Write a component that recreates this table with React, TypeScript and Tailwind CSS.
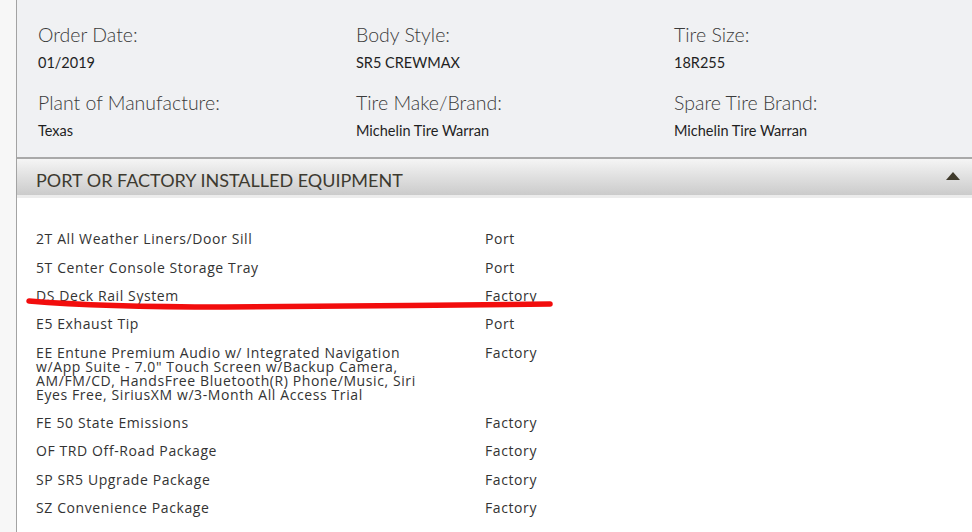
const specs = [
  { label: "Order Date:", value: "01/2019" },
  { label: "Body Style:", value: "SR5 CREWMAX" },
  { label: "Tire Size:", value: "18R255" },
  { label: "Plant of Manufacture:", value: "Texas" },
  { label: "Tire Make/Brand:", value: "Michelin Tire Warran" },
  { label: "Spare Tire Brand:", value: "Michelin Tire Warran" },
];

const equipment = [
  { name: "2T All Weather Liners/Door Sill", source: "Port" },
  { name: "5T Center Console Storage Tray", source: "Port" },
  { name: "DS Deck Rail System", source: "Factory" },
  { name: "E5 Exhaust Tip", source: "Port" },
  {
    name: 'EE Entune Premium Audio w/ Integrated Navigation w/App Suite - 7.0" Touch Screen w/Backup Camera, AM/FM/CD, HandsFree Bluetooth(R) Phone/Music, Siri Eyes Free, SiriusXM w/3-Month All Access Trial',
    source: "Factory",
  },
  { name: "FE 50 State Emissions", source: "Factory" },
  { name: "OF TRD Off-Road Package", source: "Factory" },
  { name: "SP SR5 Upgrade Package", source: "Factory" },
  { name: "SZ Convenience Package", source: "Factory" },
];

export default function App() {
  return (
    <div className="flex h-[532px] w-[972px] overflow-hidden bg-[#f7f7f7]">
      <div className="w-4 shrink-0" />
      <main className="relative flex-1 border-l border-[#a3a3a3] bg-white">
        {/* vehicle specs */}
        <section className="grid grid-cols-[318px_318px_1fr] gap-y-[17px] border-b-2 border-[#a9a9a9] bg-[#f0f1f3] pb-[16px] pl-[21px] pt-[22px] font-['Lato',sans-serif]">
          {specs.map((s) => (
            <div key={s.label}>
              <div className="text-[19.5px] font-light leading-[26px] text-[#3b3b3b]">{s.label}</div>
              <div className="mt-[5px] text-[14.5px] leading-[20px] text-[#1f1f1f]">{s.value}</div>
            </div>
          ))}
        </section>

        {/* equipment header */}
        <div className="flex h-[39px] items-center justify-between border-b-[3px] border-[#ececec] bg-gradient-to-b from-[#f5f5f5] to-[#cbcbcb] pl-[19px] pr-[12px] pt-[6px] font-['Lato',sans-serif]">
          <h2 className="text-[18px] leading-none text-[#3d3a30]">PORT OR FACTORY INSTALLED EQUIPMENT</h2>
          <svg width="14" height="8" viewBox="0 0 14 8" className="mb-[8px]">
            <polygon points="7,0 14,8 0,8" fill="#3f3a2b" />
          </svg>
        </div>

        {/* equipment list */}
        <ul className="pl-[19px] pt-[27px] font-['Open_Sans',sans-serif] text-[14px] leading-[14px] tracking-[0.6px] text-[#333]">
          {equipment.map((e) => (
            <li key={e.name} className="grid grid-cols-[380px_1fr] gap-x-[69px] py-[7.2px]">
              <span>{e.name}</span>
              <span>{e.source}</span>
            </li>
          ))}
        </ul>

        {/* red marker stroke */}
        <svg className="pointer-events-none absolute left-[8px] top-[294px]" width="540" height="20" viewBox="0 0 540 20">
          <path
            d="M4 7 C 40 10, 100 13, 200 13 S 420 11, 525 10"
            stroke="#f20d0d"
            strokeWidth="5.5"
            strokeLinecap="round"
            fill="none"
          />
        </svg>
      </main>
    </div>
  );
}
